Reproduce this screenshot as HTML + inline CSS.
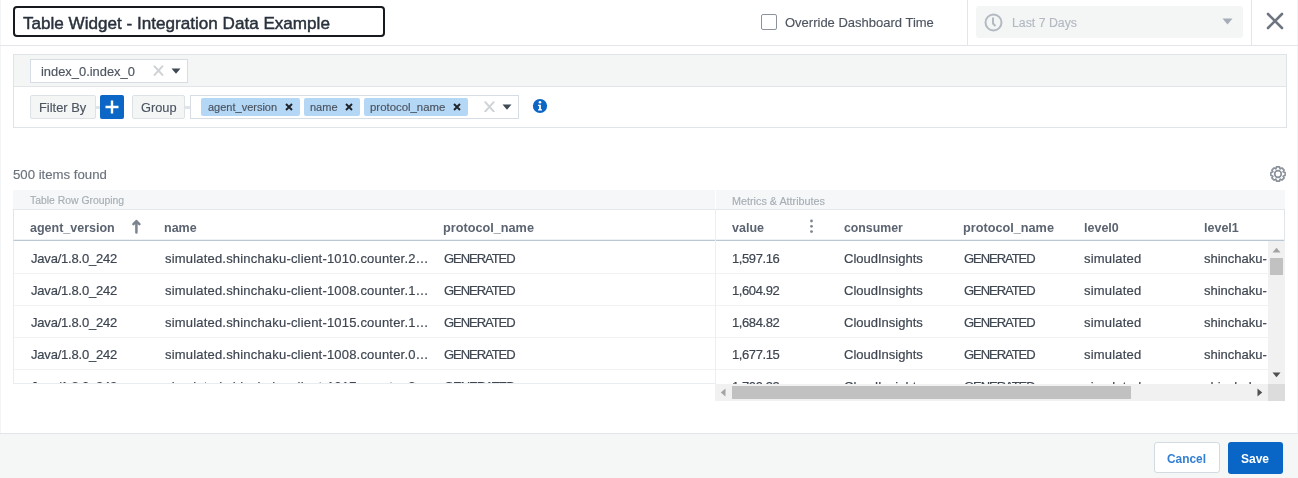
<!DOCTYPE html>
<html><head><meta charset="utf-8">
<style>
*{box-sizing:border-box;margin:0;padding:0}
html,body{width:1298px;height:478px;overflow:hidden;background:#fff;-webkit-font-smoothing:antialiased;font-family:"Liberation Sans",sans-serif;color:#4a525d}
.a{position:absolute}
.t{position:absolute;white-space:nowrap;line-height:1;will-change:transform;-webkit-text-stroke-width:0.15px}
.hl{position:absolute;height:1px;background:#e2e6ea}
.vl{position:absolute;width:1px;background:#e2e6ea}
.h{font-weight:bold;color:#5b6470;margin-top:0.5px;-webkit-text-stroke-width:0}
.r{font-size:13px;color:#3e4651;-webkit-text-stroke:0.2px #3e4651}
.c0{letter-spacing:-0.2px;margin-left:-0.5px}
.c2{letter-spacing:-1.05px}
.c3{letter-spacing:-0.4px}
.c1{letter-spacing:0.19px}
.c5{letter-spacing:0.2px}
</style></head><body>
<!-- header -->
<div class="a" style="left:0;top:0;width:1px;height:478px;background:#f4f5f7"></div><div class="a" style="left:1297px;top:0;width:1px;height:478px;background:#f4f5f7"></div>
<div class="a" style="left:13px;top:6px;width:372px;height:31px;border:2px solid #16191d;border-radius:4px"></div>
<div class="t" id="title" style="left:23px;top:15px;font-size:17.1px;color:#29313c;-webkit-text-stroke:0.45px #29313c">Table Widget - Integration Data Example</div>
<div class="hl" style="left:0;top:45px;width:1298px"></div>
<div class="a" style="left:761px;top:14px;width:16px;height:16px;border:1.5px solid #8c939c;border-radius:2px"></div>
<div class="t" id="ovr" style="left:785px;top:15.5px;font-size:13px;color:#4d5560">Override Dashboard Time</div>
<div class="vl" style="left:967px;top:0;height:45px"></div>
<div class="a" style="left:976px;top:6px;width:267px;height:32px;background:#f4f6f6;border-radius:3px"></div>
<svg class="a" style="left:984px;top:13px" width="19" height="19" viewBox="0 0 19 19"><circle cx="9.5" cy="9.5" r="8" fill="none" stroke="#b3bac2" stroke-width="2"/><path d="M9 4.5V10.5L11.5 13" fill="none" stroke="#b3bac2" stroke-width="2"/></svg>
<div class="t" id="l7" style="left:1012px;top:17px;font-size:12.3px;color:#b3b9c0">Last 7 Days</div>
<svg class="a" style="left:1222px;top:18px" width="11" height="7" viewBox="0 0 11 7"><path d="M0.5 0.5H10.5L5.5 6.5Z" fill="#a6adb6"/></svg>
<div class="vl" style="left:1251px;top:0;height:45px"></div>
<svg class="a" style="left:1266px;top:12px" width="18" height="18" viewBox="0 0 18 18"><path d="M2 2L16 16M16 2L2 16" stroke="#6d7580" stroke-width="2.6" stroke-linecap="round"/></svg>

<!-- filter panel -->
<div class="a" style="left:13px;top:54px;width:1274px;height:74px;border:1px solid #dfe4e9;background:#fff"></div>
<div class="a" style="left:14px;top:55px;width:1272px;height:32px;background:#f4f6f6;border-bottom:1px solid #e2e6ea"></div>
<div class="a" style="left:30px;top:59px;width:158px;height:24px;background:#fff;border:1px solid #d6dde4"></div>
<div class="t" id="idx" style="left:41px;top:65.5px;font-size:12.9px;color:#4d5560">index_0.index_0</div>
<svg class="a" style="left:153px;top:65px" width="11" height="11" viewBox="0 0 11 11"><path d="M1.6 1.3L9.4 9.9M9.4 1.3L1.6 9.9" stroke="#cfd2d6" stroke-width="2" stroke-linecap="round"/></svg>
<svg class="a" style="left:171px;top:68px" width="10" height="6" viewBox="0 0 10 6"><path d="M0.5 0.5H9.5L5 5.8Z" fill="#3f4855"/></svg>

<div class="a" style="left:30px;top:95px;width:66px;height:24px;background:#f4f6f6;border:1px solid #dde2e7;border-radius:2px"></div>
<div class="t" id="fb" style="left:39px;top:102px;font-size:12.9px;color:#4d5560">Filter By</div>
<div class="a" style="left:96px;top:106px;width:4px;height:3px;background:#dfe4e9"></div>
<div class="a" style="left:100px;top:95px;width:24px;height:24px;background:#0b66c6;border-radius:2px"></div>
<svg class="a" style="left:105px;top:100px" width="14" height="14" viewBox="0 0 14 14"><path d="M7 0.5V13.5M0.5 7H13.5" stroke="#fff" stroke-width="2.4"/></svg>
<div class="a" style="left:132px;top:95px;width:53px;height:24px;background:#f4f6f6;border:1px solid #dde2e7;border-radius:2px"></div>
<div class="t" id="grp" style="left:141px;top:102px;font-size:12.8px;color:#4d5560">Group</div>
<div class="a" style="left:185px;top:106px;width:5px;height:3px;background:#dfe4e9"></div>
<div class="a" style="left:190px;top:95px;width:329px;height:24px;background:#fff;border:1px solid #d6dde4"></div>
<div class="a" style="left:201px;top:98px;width:99px;height:18px;background:#b4d7f6;border-radius:2px"></div>
<div class="t" id="tg1" style="left:208px;top:102px;font-size:11px;color:#4a525d">agent_version</div>
<svg class="a" style="left:285px;top:103px" width="8" height="8" viewBox="0 0 8 8"><path d="M1 1L7 7M7 1L1 7" stroke="#1e232a" stroke-width="1.9"/></svg>
<div class="a" style="left:304px;top:98px;width:56px;height:18px;background:#b4d7f6;border-radius:2px"></div>
<div class="t" id="tg2" style="left:310px;top:102px;font-size:11px;color:#4a525d">name</div>
<svg class="a" style="left:345px;top:103px" width="8" height="8" viewBox="0 0 8 8"><path d="M1 1L7 7M7 1L1 7" stroke="#1e232a" stroke-width="1.9"/></svg>
<div class="a" style="left:364px;top:98px;width:104px;height:18px;background:#b4d7f6;border-radius:2px"></div>
<div class="t" id="tg3" style="left:370px;top:102px;font-size:11.4px;color:#4a525d">protocol_name</div>
<svg class="a" style="left:453px;top:103px" width="8" height="8" viewBox="0 0 8 8"><path d="M1 1L7 7M7 1L1 7" stroke="#1e232a" stroke-width="1.9"/></svg>
<svg class="a" style="left:484px;top:101px" width="11" height="11" viewBox="0 0 11 11"><path d="M1.3 1.2L9.7 10.4M9.7 1.2L1.3 10.4" stroke="#cfd2d6" stroke-width="2" stroke-linecap="round"/></svg>
<svg class="a" style="left:502px;top:104px" width="10" height="6" viewBox="0 0 10 6"><path d="M0.5 0.5H9.5L5 5.8Z" fill="#3f4855"/></svg>
<svg class="a" style="left:532px;top:98px" width="16" height="16" viewBox="0 0 16 16"><circle cx="8" cy="8" r="7.1" fill="#0b66c6"/><circle cx="8" cy="4.3" r="1.3" fill="#fff"/><path d="M6 6.8H8.9V11.3H10V12.4H6V11.3H7.1V7.9H6Z" fill="#fff"/></svg>

<!-- table -->
<div class="t" id="cnt" style="left:12.5px;top:168px;font-size:13.2px;color:#6b737d">500 items found</div>
<svg class="a" style="left:1269.2px;top:164.8px" width="18" height="18" viewBox="0 0 18 18"><path d="M7.03 3.76 L7.41 1.88 L10.59 1.88 L10.97 3.76 L11.31 3.90 L12.91 2.84 L15.16 5.09 L14.10 6.69 L14.24 7.03 L16.12 7.41 L16.12 10.59 L14.24 10.97 L14.10 11.31 L15.16 12.91 L12.91 15.16 L11.31 14.10 L10.97 14.24 L10.59 16.12 L7.41 16.12 L7.03 14.24 L6.69 14.10 L5.09 15.16 L2.84 12.91 L3.90 11.31 L3.76 10.97 L1.88 10.59 L1.88 7.41 L3.76 7.03 L3.90 6.69 L2.84 5.09 L5.09 2.84 L6.69 3.90Z" fill="none" stroke="#8a919a" stroke-width="1.6" stroke-linejoin="round"/><circle cx="9" cy="9" r="3.3" fill="none" stroke="#8a919a" stroke-width="1.7"/></svg>

<div class="a" style="left:13px;top:190px;width:702px;height:19px;background:#f5f7f8"></div>
<div class="a" style="left:716px;top:190px;width:569px;height:19px;background:#f5f7f8"></div>
<div class="t" id="trg" style="left:30px;top:196px;font-size:10.4px;color:#a7adb4">Table Row Grouping</div>
<div class="t" id="maa" style="left:731.5px;top:196px;font-size:10.8px;color:#a7adb4">Metrics &amp; Attributes</div>

<!-- header row -->
<div class="a" style="left:13px;top:209px;width:1272px;height:32px;border:1px solid #e1e6eb;border-bottom:1px solid #bac8d5;border-top-color:#e3e8ec;box-shadow:inset 0 -1px 0 #eef1f4"></div>
<div class="vl" style="left:715px;top:209px;height:175px;background:#eceff2"></div>
<div class="t h" style="left:30px;top:221px;font-size:12.5px">agent_version</div>
<svg class="a" style="left:131px;top:219px" width="11" height="16" viewBox="0 0 11 16"><path d="M5.4 13.4V2.4M2.4 5.2L5.4 2.2L8.4 5.2" fill="none" stroke="#7c8490" stroke-width="2.5" stroke-linecap="round" stroke-linejoin="round"/></svg>
<div class="t h" style="left:164px;top:221px;font-size:12.5px">name</div>
<div class="t h" style="left:443px;top:221px;font-size:12.7px">protocol_name</div>
<div class="t h" style="left:732px;top:221px;font-size:12.5px">value</div>
<svg class="a" style="left:809px;top:219px" width="5" height="15" viewBox="0 0 5 15"><circle cx="2.5" cy="2" r="1.4" fill="#7e8590"/><circle cx="2.5" cy="7.3" r="1.4" fill="#7e8590"/><circle cx="2.5" cy="12.6" r="1.4" fill="#7e8590"/></svg>
<div class="t h" style="left:844px;top:221px;font-size:12.3px">consumer</div>
<div class="t h" style="left:963px;top:221px;font-size:12.7px">protocol_name</div>
<div class="t h" style="left:1084px;top:221px;font-size:12.5px">level0</div>
<div class="t h" style="left:1204px;top:221px;font-size:12.5px">level1</div>

<div id="rows"><div class="a" style="left:13px;top:241px;width:702px;height:143px;overflow:hidden;border-left:1px solid #e9edf0;border-bottom:1px solid #e9edf0"><div class="a" style="left:0;top:32px;width:702px;height:1px;background:#f0f2f4"></div><div class="t r c0" style="left:17px;top:11px">Java/1.8.0_242</div><div class="t r c1" style="left:150.5px;top:11px">simulated.shinchaku-client-1010.counter.2…</div><div class="t r c2" style="left:430px;top:11px">GENERATED</div><div class="a" style="left:0;top:64px;width:702px;height:1px;background:#f0f2f4"></div><div class="t r c0" style="left:17px;top:43px">Java/1.8.0_242</div><div class="t r c1" style="left:150.5px;top:43px">simulated.shinchaku-client-1008.counter.1…</div><div class="t r c2" style="left:430px;top:43px">GENERATED</div><div class="a" style="left:0;top:96px;width:702px;height:1px;background:#f0f2f4"></div><div class="t r c0" style="left:17px;top:75px">Java/1.8.0_242</div><div class="t r c1" style="left:150.5px;top:75px">simulated.shinchaku-client-1015.counter.1…</div><div class="t r c2" style="left:430px;top:75px">GENERATED</div><div class="a" style="left:0;top:128px;width:702px;height:1px;background:#f0f2f4"></div><div class="t r c0" style="left:17px;top:107px">Java/1.8.0_242</div><div class="t r c1" style="left:150.5px;top:107px">simulated.shinchaku-client-1008.counter.0…</div><div class="t r c2" style="left:430px;top:107px">GENERATED</div><div class="t r c0" style="left:17px;top:139px">Java/1.8.0_242</div><div class="t r c1" style="left:150.5px;top:139px">simulated.shinchaku-client-1017.counter.3…</div><div class="t r c2" style="left:430px;top:139px">GENERATED</div></div><div class="a" style="left:716px;top:241px;width:552px;height:143px;overflow:hidden"><div class="a" style="left:0;top:32px;width:552px;height:1px;background:#f0f2f4"></div><div class="t r c3" style="left:16px;top:11px">1,597.16</div><div class="t r c4" style="left:128px;top:11px">CloudInsights</div><div class="t r c2" style="left:247.5px;top:11px">GENERATED</div><div class="t r c5" style="left:368px;top:11px">simulated</div><div class="t r c6" style="left:488px;top:11px">shinchaku-</div><div class="a" style="left:0;top:64px;width:552px;height:1px;background:#f0f2f4"></div><div class="t r c3" style="left:16px;top:43px">1,604.92</div><div class="t r c4" style="left:128px;top:43px">CloudInsights</div><div class="t r c2" style="left:247.5px;top:43px">GENERATED</div><div class="t r c5" style="left:368px;top:43px">simulated</div><div class="t r c6" style="left:488px;top:43px">shinchaku-</div><div class="a" style="left:0;top:96px;width:552px;height:1px;background:#f0f2f4"></div><div class="t r c3" style="left:16px;top:75px">1,684.82</div><div class="t r c4" style="left:128px;top:75px">CloudInsights</div><div class="t r c2" style="left:247.5px;top:75px">GENERATED</div><div class="t r c5" style="left:368px;top:75px">simulated</div><div class="t r c6" style="left:488px;top:75px">shinchaku-</div><div class="a" style="left:0;top:128px;width:552px;height:1px;background:#f0f2f4"></div><div class="t r c3" style="left:16px;top:107px">1,677.15</div><div class="t r c4" style="left:128px;top:107px">CloudInsights</div><div class="t r c2" style="left:247.5px;top:107px">GENERATED</div><div class="t r c5" style="left:368px;top:107px">simulated</div><div class="t r c6" style="left:488px;top:107px">shinchaku-</div><div class="t r c3" style="left:16px;top:139px">1,709.33</div><div class="t r c4" style="left:128px;top:139px">CloudInsights</div><div class="t r c2" style="left:247.5px;top:139px">GENERATED</div><div class="t r c5" style="left:368px;top:139px">simulated</div><div class="t r c6" style="left:488px;top:139px">shinchaku-</div></div>
<div class="a" style="left:1268px;top:241px;width:17px;height:143px;background:#f1f1f1"></div>
<svg class="a" style="left:1272px;top:247px" width="9" height="6" viewBox="0 0 9 6"><path d="M0.5 5.5H8.5L4.5 0.8Z" fill="#a3a3a3"/></svg>
<div class="a" style="left:1270px;top:258px;width:13px;height:17px;background:#c1c1c1"></div>
<svg class="a" style="left:1272px;top:372px" width="9" height="6" viewBox="0 0 9 6"><path d="M0.5 0.5H8.5L4.5 5.2Z" fill="#505050"/></svg>
<div class="a" style="left:715px;top:384px;width:553px;height:17px;background:#f1f1f1"></div>
<svg class="a" style="left:720px;top:388px" width="6" height="9" viewBox="0 0 6 9"><path d="M5.5 0.5V8.5L0.8 4.5Z" fill="#a3a3a3"/></svg>
<div class="a" style="left:732px;top:386px;width:399px;height:13px;background:#c1c1c1"></div>
<svg class="a" style="left:1257px;top:388px" width="6" height="9" viewBox="0 0 6 9"><path d="M0.5 0.5V8.5L5.2 4.5Z" fill="#505050"/></svg>
<div class="a" style="left:1268px;top:384px;width:17px;height:17px;background:#dcdcdc"></div>
<div class="vl" style="left:1284px;top:209px;height:32px"></div>

<div class="a" style="left:0;top:433px;width:1298px;height:45px;background:#f5f7f7;border-top:1px solid #e2e6eb"></div>
<div class="a" style="left:1154px;top:442px;width:66px;height:31px;background:#fff;border:1px solid #d3dae1;border-radius:3px"></div>
<div class="t" id="cancel" style="left:1167px;top:453.7px;font-size:11.9px;color:#3380d2;font-weight:bold;-webkit-text-stroke-width:0">Cancel</div>
<div class="a" style="left:1228px;top:442px;width:55px;height:32px;background:#0a66c6;border-radius:3px"></div>
<div class="t" id="save" style="left:1241px;top:453px;font-size:12px;color:#fff;font-weight:bold;-webkit-text-stroke-width:0">Save</div>
</div>
</body></html>
